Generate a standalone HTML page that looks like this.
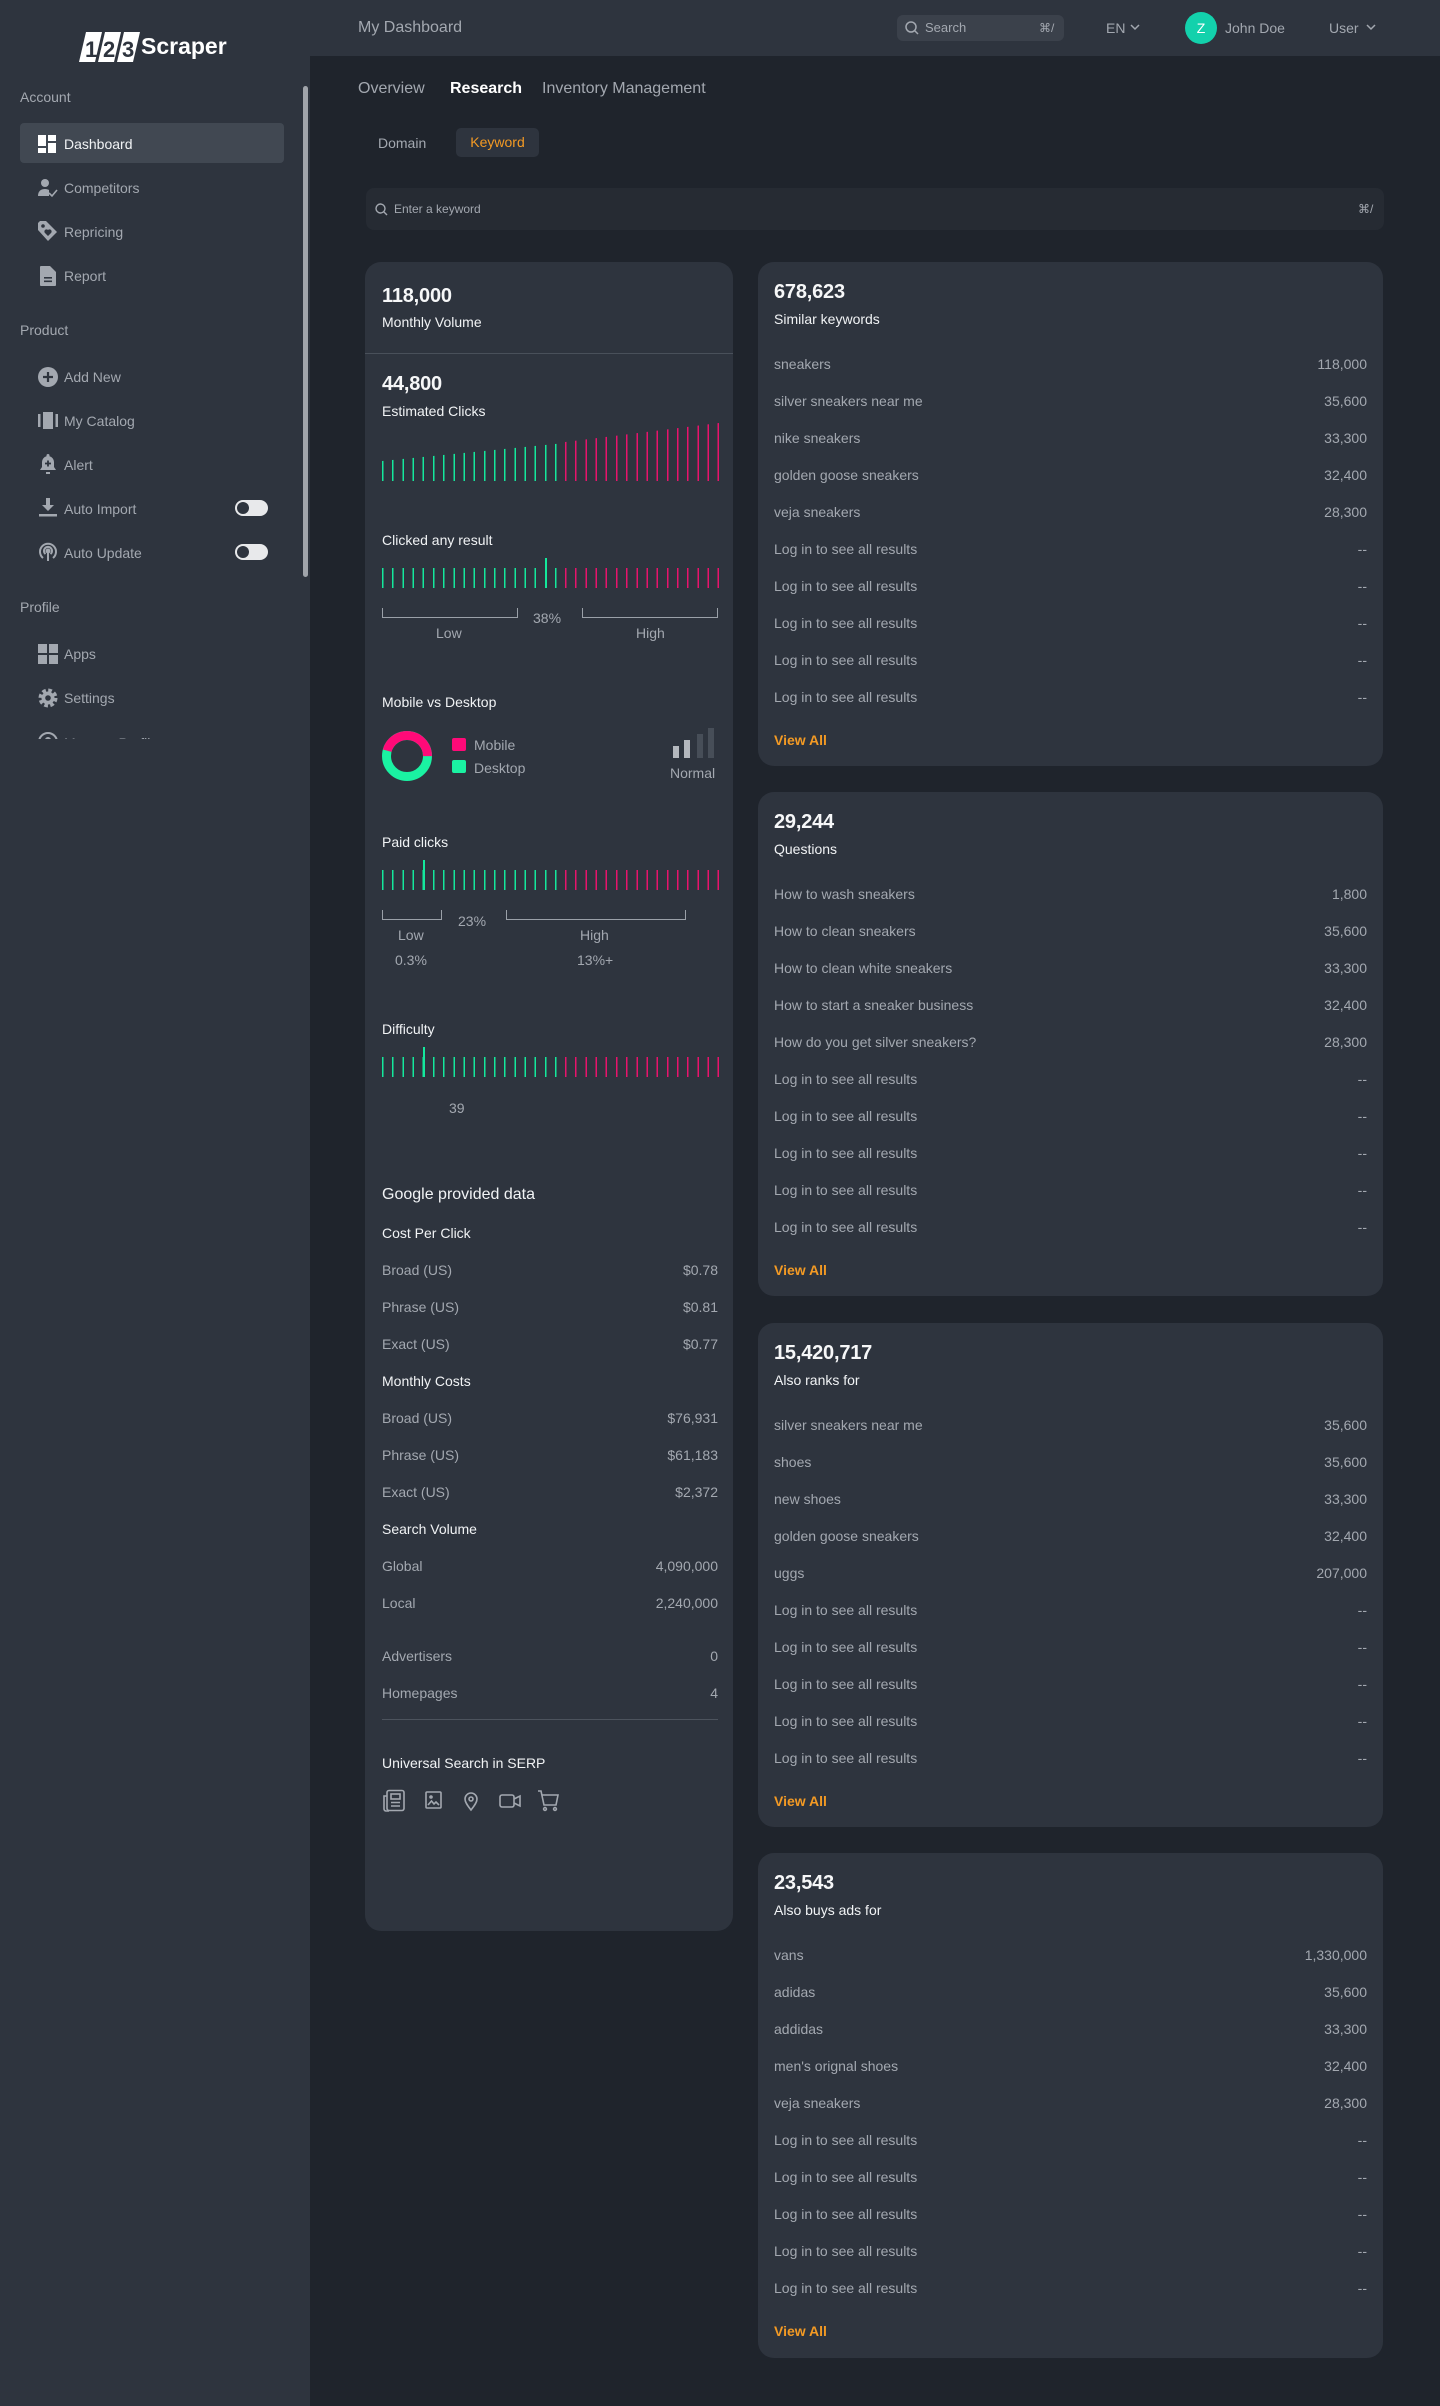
<!DOCTYPE html>
<html><head><meta charset="utf-8">
<style>
*{margin:0;padding:0;box-sizing:border-box}
body{width:1440px;height:2406px;background:#1f242c;font-family:"Liberation Sans",sans-serif;position:relative;overflow:hidden;color:#a3a8b0}
.a{position:absolute;white-space:nowrap}
.side{position:absolute;left:0;top:0;width:310px;height:2406px;background:#2e343e}
.hdr{position:absolute;left:310px;top:0;width:1130px;height:56px;background:#2e343e}
.t14{font-size:14px;line-height:20px}
.w{color:#f1f3f5}
.g{color:#a3a8b0}
.card{position:absolute;background:#2e343e;border-radius:16px}
.rc{padding:18px 16px 0 16px}
.num{font-size:20px;line-height:24px;color:#f6f7f8;font-weight:bold;letter-spacing:-0.2px}
.sub{font-size:14px;line-height:20px;color:#f1f3f5;margin-top:5px}
.rows{margin-top:17px}
.row{display:flex;justify-content:space-between;height:37px;line-height:37px;font-size:14px;color:#a3a8b0}
.va{margin-top:14px;font-size:14px;line-height:20px;color:#f39a24;font-weight:bold}
.bars{position:absolute;height:20px}
.gb{background:repeating-linear-gradient(to right,#14e89c 0 1.5px,transparent 1.5px 10.18px)}
.pb{background:repeating-linear-gradient(to right,#e8136c 0 1.5px,transparent 1.5px 10.18px)}
.brk{position:absolute;border:1.5px solid #9aa0a8;border-top:none;height:10px}
.nav .a{font-size:14px;line-height:20px}
</style></head><body>
<div class="side"></div>
<div class="hdr"></div>
<!-- logo -->
<svg class="a" style="left:78px;top:30px" width="160" height="34" viewBox="0 0 160 34">
<polygon points="8,2 24,2 17,32 1,32" fill="#fff"/>
<polygon points="27,2 43,2 36,32 20,32" fill="#fff"/>
<polygon points="46,2 62,2 55,32 39,32" fill="#fff"/>
<text x="7" y="27" font-family="Liberation Sans" font-size="22" font-weight="bold" fill="#2e343e">1</text>
<text x="25" y="27" font-family="Liberation Sans" font-size="22" font-weight="bold" fill="#2e343e">2</text>
<text x="44" y="27" font-family="Liberation Sans" font-size="22" font-weight="bold" fill="#2e343e">3</text>
<text x="63" y="24" font-family="Liberation Sans" font-size="23" font-weight="bold" fill="#fff">Scraper</text>
</svg>
<div class="nav">
<div class="a g" style="left:20px;top:87px">Account</div>
<div class="a" style="left:20px;top:123px;width:264px;height:40px;background:#414852;border-radius:4px"></div>
<svg class="a" style="left:38px;top:135px" width="18" height="18"><rect x="0" y="0" width="8" height="11" fill="#fff"/><rect x="10" y="0" width="8" height="6" fill="#fff"/><rect x="0" y="13" width="8" height="5" fill="#fff"/><rect x="10" y="8" width="8" height="10" fill="#fff"/></svg>
<div class="a w" style="left:64px;top:134px">Dashboard</div>
<svg class="a" style="left:38px;top:178px" width="20" height="20" fill="#a3a8b0"><circle cx="7" cy="5" r="4"/><path d="M0 18c0-5 3-7 7-7 2 0 3 .5 4 1v6z"/><path d="M11 15l3 3 5-6" stroke="#a3a8b0" stroke-width="1.6" fill="none"/></svg>
<div class="a g" style="left:64px;top:178px">Competitors</div>
<svg class="a" style="left:38px;top:221px" width="20" height="22" fill="#a3a8b0"><path d="M0 2v7l10 11 9-9L8 0H2z"/><circle cx="5" cy="5" r="1.8" fill="#2e343e"/><path d="M10 15l-3-3a2 2 0 013-3 2 2 0 013 3z" fill="#2e343e"/></svg>
<div class="a g" style="left:64px;top:222px">Repricing</div>
<svg class="a" style="left:40px;top:266px" width="16" height="20" fill="#a3a8b0"><path d="M0 1q0-1 1-1h9l6 6v13q0 1-1 1H1q-1 0-1-1z"/><rect x="4" y="11" width="8" height="1.6" fill="#2e343e"/><rect x="4" y="14.5" width="8" height="1.6" fill="#2e343e"/></svg>
<div class="a g" style="left:64px;top:266px">Report</div>
<div class="a g" style="left:20px;top:320px">Product</div>
<svg class="a" style="left:38px;top:367px" width="20" height="20"><circle cx="10" cy="10" r="10" fill="#a3a8b0"/><path d="M10 5v10M5 10h10" stroke="#2e343e" stroke-width="2.2"/></svg>
<div class="a g" style="left:64px;top:367px">Add New</div>
<svg class="a" style="left:38px;top:412px" width="20" height="18" fill="#a3a8b0"><rect x="0" y="2" width="2.5" height="13"/><rect x="5" y="0" width="10" height="17"/><rect x="17.5" y="2" width="2.5" height="13"/></svg>
<div class="a g" style="left:64px;top:411px">My Catalog</div>
<svg class="a" style="left:38px;top:454px" width="20" height="22" fill="#a3a8b0"><path d="M10 0a1.5 1.5 0 011.5 1.5v.8A6 6 0 0116 8v5l2 3H2l2-3V8a6 6 0 014.5-5.7v-.8A1.5 1.5 0 0110 0z"/><rect x="8" y="18" width="4" height="2"/><path d="M10 6.5v6M7 9.5h6" stroke="#2e343e" stroke-width="1.8"/></svg>
<div class="a g" style="left:64px;top:455px">Alert</div>
<svg class="a" style="left:39px;top:498px" width="18" height="20" fill="#a3a8b0"><path d="M7 0h4v7h4l-6 6-6-6h4z"/><rect x="0" y="16" width="18" height="2.5"/></svg>
<div class="a g" style="left:64px;top:499px">Auto Import</div>
<div class="a" style="left:235px;top:500px;width:33px;height:16px;background:#e8e9eb;border-radius:8px"><div style="position:absolute;left:2px;top:2px;width:12px;height:12px;border-radius:6px;background:#2e343e"></div></div>
<svg class="a" style="left:38px;top:541px" width="20" height="22" fill="none" stroke="#a3a8b0" stroke-width="2"><path d="M5 17a8 8 0 1110 0"/><path d="M7.5 13a4 4 0 115 0"/><circle cx="10" cy="10" r="1.5" fill="#a3a8b0"/><path d="M10 12v8"/></svg>
<div class="a g" style="left:64px;top:543px">Auto Update</div>
<div class="a" style="left:235px;top:544px;width:33px;height:16px;background:#e8e9eb;border-radius:8px"><div style="position:absolute;left:2px;top:2px;width:12px;height:12px;border-radius:6px;background:#2e343e"></div></div>
<div class="a g" style="left:20px;top:597px">Profile</div>
<svg class="a" style="left:38px;top:644px" width="20" height="20" fill="#a3a8b0"><rect x="0" y="0" width="9" height="9"/><rect x="11" y="0" width="9" height="9"/><rect x="0" y="11" width="9" height="9"/><rect x="11" y="11" width="9" height="9"/></svg>
<div class="a g" style="left:64px;top:644px">Apps</div>
<svg class="a" style="left:38px;top:688px" width="20" height="20"><circle cx="10" cy="10" r="7" fill="none" stroke="#a3a8b0" stroke-width="5" stroke-dasharray="3.3 2.2"/><circle cx="10" cy="10" r="6.5" fill="#a3a8b0"/><circle cx="10" cy="10" r="2.8" fill="#2e343e"/></svg>
<div class="a g" style="left:64px;top:688px">Settings</div>
<div class="a" style="left:0;top:730px;width:300px;height:9px;overflow:hidden"><svg class="a" style="left:38px;top:2px" width="20" height="20"><circle cx="10" cy="10" r="9" fill="none" stroke="#a3a8b0" stroke-width="2"/><circle cx="10" cy="8" r="3" fill="#a3a8b0"/></svg><div class="a g" style="left:64px;top:3px;font-size:14px">Manage Profile</div></div>
</div>
<div class="a" style="left:303px;top:86px;width:5px;height:491px;background:#a0a4aa;border-radius:3px"></div>

<!-- header -->
<div class="a" style="left:358px;top:17px;font-size:16px;line-height:22px;color:#a3a8b0">My Dashboard</div>
<div class="a" style="left:897px;top:15px;width:167px;height:26px;background:#3b414b;border-radius:6px"></div>
<svg class="a" style="left:905px;top:21px" width="14" height="14" fill="none" stroke="#a3a8b0" stroke-width="1.5"><circle cx="6" cy="6" r="5"/><path d="M10 10l3 3"/></svg>
<div class="a" style="left:925px;top:18px;font-size:13px;line-height:20px;color:#a3a8b0">Search</div>
<div class="a" style="left:1039px;top:18px;font-size:12px;line-height:20px;color:#a3a8b0">⌘/</div>
<div class="a" style="left:1106px;top:18px;font-size:14px;line-height:20px;color:#a3a8b0">EN</div>
<svg class="a" style="left:1130px;top:24px" width="10" height="7" fill="none" stroke="#a3a8b0" stroke-width="1.5"><path d="M1 1l4 4 4-4"/></svg>
<div class="a" style="left:1185px;top:12px;width:32px;height:32px;border-radius:16px;background:#13d1ac;color:#fff;font-size:14px;line-height:32px;text-align:center">Z</div>
<div class="a" style="left:1225px;top:18px;font-size:14px;line-height:20px;color:#a3a8b0">John Doe</div>
<div class="a" style="left:1329px;top:18px;font-size:14px;line-height:20px;color:#a3a8b0">User</div>
<svg class="a" style="left:1366px;top:24px" width="10" height="7" fill="none" stroke="#a3a8b0" stroke-width="1.5"><path d="M1 1l4 4 4-4"/></svg>

<!-- tabs -->
<div class="a" style="left:358px;top:78px;font-size:16px;line-height:22px;color:#a3a8b0">Overview</div>
<div class="a" style="left:450px;top:78px;font-size:16px;line-height:22px;color:#fff;font-weight:bold">Research</div>
<div class="a" style="left:542px;top:78px;font-size:16px;line-height:22px;color:#a3a8b0">Inventory Management</div>
<div class="a" style="left:378px;top:133px;font-size:14px;line-height:20px;color:#a3a8b0">Domain</div>
<div class="a" style="left:456px;top:128px;width:83px;height:29px;background:#2e343e;border-radius:5px;color:#f39a24;font-size:14px;line-height:29px;text-align:center">Keyword</div>
<div class="a" style="left:366px;top:188px;width:1018px;height:42px;background:#262b33;border-radius:8px"></div>
<svg class="a" style="left:375px;top:203px" width="13" height="13" fill="none" stroke="#a3a8b0" stroke-width="1.4"><circle cx="5.5" cy="5.5" r="4.5"/><path d="M9 9l3 3"/></svg>
<div class="a" style="left:394px;top:200px;font-size:12px;line-height:18px;color:#a3a8b0">Enter a keyword</div>
<div class="a" style="left:1358px;top:200px;font-size:12px;line-height:18px;color:#a3a8b0">⌘/</div>

<!-- left card -->
<div class="card" style="left:365px;top:262px;width:368px;height:1669px"></div>
<div class="a num" style="left:382px;top:284px">118,000</div>
<div class="a t14 w" style="left:382px;top:312px">Monthly Volume</div>
<div class="a" style="left:365px;top:353px;width:368px;height:1px;background:#49505a"></div>
<div class="a num" style="left:382px;top:372px">44,800</div>
<div class="a t14 w" style="left:382px;top:401px">Estimated Clicks</div>
<div class="a gb" style="left:382px;top:423px;width:183px;height:58px;clip-path:polygon(0 38px,100% 20px,100% 100%,0 100%)"></div>
<div class="a pb" style="left:565px;top:423px;width:154px;height:58px;clip-path:polygon(0 19px,100% 0,100% 100%,0 100%)"></div>

<div class="a t14 w" style="left:382px;top:530px">Clicked any result</div>
<div class="bars gb" style="left:382px;top:568px;width:183px"></div>
<div class="bars pb" style="left:565px;top:568px;width:154px"></div>
<div class="a" style="left:545px;top:558px;width:1.5px;height:30px;background:#14e89c"></div>
<div class="brk" style="left:382px;top:608px;width:136px"></div>
<div class="brk" style="left:582px;top:608px;width:136px"></div>
<div class="a t14" style="left:533px;top:608px">38%</div>
<div class="a t14" style="left:436px;top:623px">Low</div>
<div class="a t14" style="left:636px;top:623px">High</div>

<div class="a t14 w" style="left:382px;top:692px">Mobile vs Desktop</div>
<svg class="a" style="left:380px;top:729px" width="54" height="54"><circle cx="27" cy="27" r="20.5" fill="none" stroke="#1af2a2" stroke-width="9"/><circle cx="27" cy="27" r="20.5" fill="none" stroke="#ff0a78" stroke-width="9" stroke-dasharray="59 200" transform="rotate(195 27 27)"/></svg>
<div class="a" style="left:452px;top:738px;width:14px;height:13px;background:#ff0a78;border-radius:2px"></div>
<div class="a t14" style="left:474px;top:735px">Mobile</div>
<div class="a" style="left:452px;top:760px;width:14px;height:13px;background:#1af2a2;border-radius:2px"></div>
<div class="a t14" style="left:474px;top:758px">Desktop</div>
<div class="a" style="left:673px;top:746px;width:6px;height:12px;background:#b4b8be"></div>
<div class="a" style="left:684px;top:740px;width:6px;height:18px;background:#b4b8be"></div>
<div class="a" style="left:697px;top:734px;width:6px;height:24px;background:#474e58"></div>
<div class="a" style="left:708px;top:728px;width:6px;height:30px;background:#474e58"></div>
<div class="a t14" style="left:670px;top:763px">Normal</div>

<div class="a t14 w" style="left:382px;top:832px">Paid clicks</div>
<div class="bars gb" style="left:382px;top:870px;width:183px"></div>
<div class="bars pb" style="left:565px;top:870px;width:154px"></div>
<div class="a" style="left:423px;top:860px;width:1.5px;height:30px;background:#14e89c"></div>
<div class="brk" style="left:382px;top:910px;width:60px"></div>
<div class="brk" style="left:506px;top:910px;width:180px"></div>
<div class="a t14" style="left:458px;top:911px">23%</div>
<div class="a t14" style="left:398px;top:925px">Low</div>
<div class="a t14" style="left:580px;top:925px">High</div>
<div class="a t14" style="left:395px;top:950px">0.3%</div>
<div class="a t14" style="left:577px;top:950px">13%+</div>

<div class="a t14 w" style="left:382px;top:1019px">Difficulty</div>
<div class="bars gb" style="left:382px;top:1057px;width:183px"></div>
<div class="bars pb" style="left:565px;top:1057px;width:154px"></div>
<div class="a" style="left:423px;top:1047px;width:1.5px;height:30px;background:#14e89c"></div>
<div class="a t14" style="left:449px;top:1098px">39</div>

<div class="a w" style="left:382px;top:1184px;font-size:16px;line-height:22px">Google provided data</div>
<div class="a" style="left:382px;top:1223px;width:336px">
<div class="t14 w" style="height:37px">Cost Per Click</div>
<div class="row" style="margin-top:-8.5px"><span>Broad (US)</span><span>$0.78</span></div>
<div class="row"><span>Phrase (US)</span><span>$0.81</span></div>
<div class="row"><span>Exact (US)</span><span>$0.77</span></div>
<div class="t14 w" style="height:37px;margin-top:8.5px">Monthly Costs</div>
<div class="row" style="margin-top:-8.5px"><span>Broad (US)</span><span>$76,931</span></div>
<div class="row"><span>Phrase (US)</span><span>$61,183</span></div>
<div class="row"><span>Exact (US)</span><span>$2,372</span></div>
<div class="t14 w" style="height:37px;margin-top:8.5px">Search Volume</div>
<div class="row" style="margin-top:-8.5px"><span>Global</span><span>4,090,000</span></div>
<div class="row"><span>Local</span><span>2,240,000</span></div>
<div class="row" style="margin-top:16px"><span>Advertisers</span><span>0</span></div>
<div class="row"><span>Homepages</span><span>4</span></div>
</div>
<div class="a" style="left:382px;top:1719px;width:336px;height:1px;background:#4c535d"></div>
<div class="a t14 w" style="left:382px;top:1753px">Universal Search in SERP</div>
<svg class="a" style="left:382px;top:1789px" width="180" height="24" fill="none" stroke="#a3a8b0" stroke-width="1.6">
<rect x="5" y="1.5" width="17" height="20" rx="2"/><path d="M5 7H2v13a2 2 0 002 2h3"/><rect x="9" y="5" width="9" height="5"/><path d="M9 13.5h9M9 17h9"/>
<rect x="44" y="3" width="15" height="16" rx="1"/><path d="M46 16l3.5-4 2.5 3 2-2 3 3"/><circle cx="49" cy="8" r="1"/>
<path d="M89 21c-4-5-6-8-6-11a6 6 0 0112 0c0 3-2 6-6 11z"/><circle cx="89" cy="10" r="2"/>
<rect x="118" y="6" width="14" height="12" rx="2"/><path d="M132 10l6-3v10l-6-3"/>
<path d="M156 2h3l3 14h12l2-10h-16"/><circle cx="163" cy="20" r="1.4"/><circle cx="173" cy="20" r="1.4"/>
</svg>

<!-- right cards -->
<div class="card rc" style="left:758px;top:262px;width:625px;height:504px">
<div class="num">678,623</div><div class="sub">Similar keywords</div>
<div class="rows">
<div class="row"><span>sneakers</span><span>118,000</span></div>
<div class="row"><span>silver sneakers near me</span><span>35,600</span></div>
<div class="row"><span>nike sneakers</span><span>33,300</span></div>
<div class="row"><span>golden goose sneakers</span><span>32,400</span></div>
<div class="row"><span>veja sneakers</span><span>28,300</span></div>
<div class="row"><span>Log in to see all results</span><span>--</span></div>
<div class="row"><span>Log in to see all results</span><span>--</span></div>
<div class="row"><span>Log in to see all results</span><span>--</span></div>
<div class="row"><span>Log in to see all results</span><span>--</span></div>
<div class="row"><span>Log in to see all results</span><span>--</span></div>
</div><div class="va">View All</div></div>

<div class="card rc" style="left:758px;top:792px;width:625px;height:504px">
<div class="num">29,244</div><div class="sub">Questions</div>
<div class="rows">
<div class="row"><span>How to wash sneakers</span><span>1,800</span></div>
<div class="row"><span>How to clean sneakers</span><span>35,600</span></div>
<div class="row"><span>How to clean white sneakers</span><span>33,300</span></div>
<div class="row"><span>How to start a sneaker business</span><span>32,400</span></div>
<div class="row"><span>How do you get silver sneakers?</span><span>28,300</span></div>
<div class="row"><span>Log in to see all results</span><span>--</span></div>
<div class="row"><span>Log in to see all results</span><span>--</span></div>
<div class="row"><span>Log in to see all results</span><span>--</span></div>
<div class="row"><span>Log in to see all results</span><span>--</span></div>
<div class="row"><span>Log in to see all results</span><span>--</span></div>
</div><div class="va">View All</div></div>

<div class="card rc" style="left:758px;top:1323px;width:625px;height:504px">
<div class="num">15,420,717</div><div class="sub">Also ranks for</div>
<div class="rows">
<div class="row"><span>silver sneakers near me</span><span>35,600</span></div>
<div class="row"><span>shoes</span><span>35,600</span></div>
<div class="row"><span>new shoes</span><span>33,300</span></div>
<div class="row"><span>golden goose sneakers</span><span>32,400</span></div>
<div class="row"><span>uggs</span><span>207,000</span></div>
<div class="row"><span>Log in to see all results</span><span>--</span></div>
<div class="row"><span>Log in to see all results</span><span>--</span></div>
<div class="row"><span>Log in to see all results</span><span>--</span></div>
<div class="row"><span>Log in to see all results</span><span>--</span></div>
<div class="row"><span>Log in to see all results</span><span>--</span></div>
</div><div class="va">View All</div></div>

<div class="card rc" style="left:758px;top:1853px;width:625px;height:505px">
<div class="num">23,543</div><div class="sub">Also buys ads for</div>
<div class="rows">
<div class="row"><span>vans</span><span>1,330,000</span></div>
<div class="row"><span>adidas</span><span>35,600</span></div>
<div class="row"><span>addidas</span><span>33,300</span></div>
<div class="row"><span>men's orignal shoes</span><span>32,400</span></div>
<div class="row"><span>veja sneakers</span><span>28,300</span></div>
<div class="row"><span>Log in to see all results</span><span>--</span></div>
<div class="row"><span>Log in to see all results</span><span>--</span></div>
<div class="row"><span>Log in to see all results</span><span>--</span></div>
<div class="row"><span>Log in to see all results</span><span>--</span></div>
<div class="row"><span>Log in to see all results</span><span>--</span></div>
</div><div class="va">View All</div></div>
</body></html>
